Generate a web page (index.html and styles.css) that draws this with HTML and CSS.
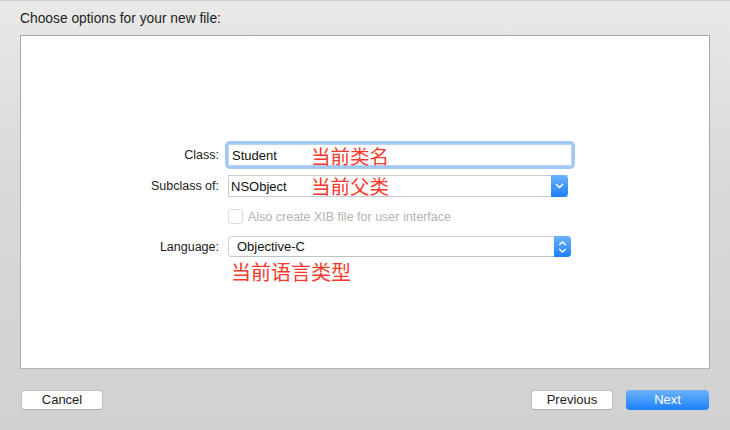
FILE: index.html
```html
<!DOCTYPE html>
<html>
<head>
<meta charset="utf-8">
<link rel="stylesheet" href="styles.css">
</head>
<body>
<div class="sheet">
  <div class="title">Choose options for your new file:</div>
  <div class="panel">
    <div class="form">
      <div class="row row-class">
        <label class="label">Class:</label>
        <div class="textfield">
          <span class="value">Student</span>
          <span class="note note-field">当前类名</span>
        </div>
      </div>
      <div class="row row-sub">
        <label class="label">Subclass of:</label>
        <div class="combo">
          <span class="value">NSObject</span>
          <span class="note note-field">当前父类</span>
          <span class="combo-btn">
            <svg width="9" height="6" viewBox="0 0 9 6"><path d="M1 1 L4.5 4.5 L8 1" fill="none" stroke="#fff" stroke-width="1.5"/></svg>
          </span>
        </div>
      </div>
      <div class="row row-check">
        <span class="label"></span>
        <div class="check">
          <span class="box"></span>
          <span class="check-text">Also create XIB file for user interface</span>
        </div>
      </div>
      <div class="row row-lang">
        <label class="label">Language:</label>
        <div class="popup">
          <span class="value">Objective-C</span>
          <span class="popup-btn">
            <svg width="9" height="14" viewBox="0 0 9 14"><path d="M1.2 5 L4.5 2 L7.8 5" fill="none" stroke="#fff" stroke-width="1.4"/><path d="M1.2 9 L4.5 12 L7.8 9" fill="none" stroke="#fff" stroke-width="1.4"/></svg>
          </span>
        </div>
      </div>
      <div class="row row-note">
        <span class="label"></span>
        <span class="note-lang">当前语言类型</span>
      </div>
    </div>
  </div>
  <div class="footer">
    <button class="btn">Cancel</button>
    <div class="spacer"></div>
    <button class="btn">Previous</button>
    <button class="btn btn-primary">Next</button>
  </div>
</div>
</body>
</html>
```

FILE: styles.css
```css
html, body {
  margin: 0;
  padding: 0;
}
body {
  width: 730px;
  height: 430px;
  overflow: hidden;
  font-family: "Liberation Sans", Arial, sans-serif;
  color: #1e1e1e;
}
.sheet {
  height: 430px;
  box-sizing: border-box;
  border-top: 1px solid #cdcdcd;
  background: linear-gradient(#e9e9e9, #d9d9d9 40%, #d1d1d1);
  display: flex;
  flex-direction: column;
}
.title {
  height: 34px;
  box-sizing: border-box;
  padding: 10px 0 0 20px;
  font-size: 13.8px;
  line-height: 16px;
}
.panel {
  margin: 0 20px 0 20px;
  height: 334px;
  box-sizing: border-box;
  background: #fff;
  border: 1px solid #a6a6a6;
  border-bottom-color: #b4b4b4;
}
.form {
  padding-top: 108px;
  display: flex;
  flex-direction: column;
}
.row {
  display: flex;
  align-items: center;
}
.label {
  width: 198px;
  flex: none;
  text-align: right;
  font-size: 12.5px;
  color: #222;
  margin-right: 9px;
}
.value {
  font-size: 13px;
  color: #111;
}
.textfield {
  position: relative;
  width: 344px;
  height: 22px;
  box-sizing: border-box;
  border: 1px solid #b8d3f0;
  border-radius: 2px;
  box-shadow: 0 0 0 3px #a0c9f5;
  display: flex;
  align-items: center;
  padding-left: 3px;
}
.note {
  position: absolute;
  font-family: "Noto Sans CJK SC", sans-serif;
  font-size: 19.5px;
  line-height: 22px;
  color: #f6392c;
  white-space: nowrap;
}
.note-field {
  left: 82px;
  top: 0;
}
.row-sub {
  margin-top: 9px;
}
.combo {
  position: relative;
  width: 340px;
  height: 22px;
  box-sizing: border-box;
  border: 1px solid #cbcbcb;
  border-right: none;
  display: flex;
  align-items: center;
  padding-left: 2px;
}
.combo .note-field {
  top: -1px;
}
.combo-btn {
  position: absolute;
  right: 0;
  top: -1px;
  width: 17px;
  height: 22px;
  border-radius: 0 4px 4px 0;
  background: linear-gradient(#6db2fb, #1b80fb);
  display: flex;
  align-items: center;
  justify-content: center;
}
.row-check {
  margin-top: 12px;
}
.check {
  display: flex;
  align-items: center;
}
.box {
  width: 13px;
  height: 13px;
  border: 1px solid #dcdcdc;
  border-radius: 3px;
  margin-right: 5px;
  background: #fff;
}
.check-text {
  font-size: 12.5px;
  color: #b3b3b3;
}
.row-lang {
  margin-top: 12px;
}
.popup {
  position: relative;
  width: 343px;
  height: 21px;
  box-sizing: border-box;
  border: 1px solid #d3d3d3;
  border-bottom-color: #c2c2c2;
  border-radius: 4px;
  display: flex;
  align-items: center;
  padding-left: 8px;
  background: #fff;
}
.popup-btn {
  position: absolute;
  right: -1px;
  top: -1px;
  width: 17px;
  height: 21px;
  border-radius: 0 4px 4px 0;
  background: linear-gradient(#6db2fb, #1b80fb);
  display: flex;
  align-items: center;
  justify-content: center;
}
.row-note {
  margin-top: 2px;
}
.note-lang {
  font-family: "Noto Sans CJK SC", sans-serif;
  font-size: 20px;
  line-height: 26px;
  color: #f6392c;
  margin-left: 3px;
}
.footer {
  display: flex;
  padding: 21px 21px 0 21px;
  align-items: flex-start;
}
.spacer {
  flex: 1;
}
.btn {
  width: 82px;
  height: 20px;
  box-sizing: border-box;
  border: 1px solid #c2c2c2;
  border-bottom-color: #afafaf;
  border-radius: 4px;
  background: #fff;
  font-family: "Liberation Sans", Arial, sans-serif;
  font-size: 13px;
  color: #222;
  padding: 0;
  line-height: 18px;
}
.btn + .btn {
  margin-left: 13px;
}
.btn-primary {
  width: 83px;
  border: none;
  background: linear-gradient(#6cb3fb, #1a80fb);
  color: #fff;
  line-height: 20px;
}
```
